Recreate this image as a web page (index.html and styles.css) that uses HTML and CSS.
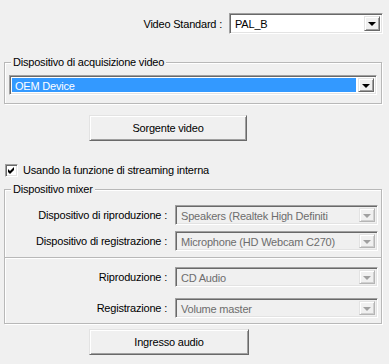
FILE: index.html
```html
<!DOCTYPE html>
<html lang="it">
<head>
	<meta charset="UTF-8">
	<title>Impostazioni video</title>
	<link rel="stylesheet" href="styles.css">
</head>
<body>
	<div class="dialog">
		<div class="std-row">
			<span class="label">Video Standard :</span>
			<div class="combo std">
				<span class="value">PAL_B</span>
				<span class="drop"><i></i></span>
			</div>
		</div>

		<div class="group capture">
			<span class="group-title">Dispositivo di acquisizione video</span>
			<div class="combo sel">
				<span class="value">OEM Device</span>
				<span class="drop"><i></i></span>
			</div>
		</div>

		<button class="btn first">Sorgente video</button>

		<label class="check-row">
			<span class="check">
				<svg width="9" height="9" viewBox="0 0 9 9"><polygon points="1,3 3,5 7,1 7,4 3,8 1,6" fill="#000"/></svg>
			</span>
			Usando la funzione di streaming interna
		</label>

		<div class="group mixer">
			<span class="group-title">Dispositivo mixer</span>
			<div class="mix-grid">
				<span class="label">Dispositivo di riproduzione :</span>
				<div class="combo off">
					<span class="value">Speakers (Realtek High Definiti</span>
					<span class="drop"><i></i></span>
				</div>
				<span class="label">Dispositivo di registrazione :</span>
				<div class="combo off">
					<span class="value">Microphone (HD Webcam C270)</span>
					<span class="drop"><i></i></span>
				</div>
			</div>
			<div class="divider"></div>
			<div class="mix-grid lower">
				<span class="label">Riproduzione :</span>
				<div class="combo off">
					<span class="value">CD Audio</span>
					<span class="drop"><i></i></span>
				</div>
				<span class="label">Registrazione :</span>
				<div class="combo off">
					<span class="value">Volume master</span>
					<span class="drop"><i></i></span>
				</div>
			</div>
		</div>

		<button class="btn second">Ingresso audio</button>
	</div>
</body>
</html>
```

FILE: styles.css
```css
*{
	margin: 0;
	padding: 0;
	box-sizing: border-box;
}
body{
	background: #f0f0f0;
	font-family: "Liberation Sans", Arial, sans-serif;
	font-size: 11px;
	letter-spacing: -0.2px;
	color: #000;
}
.dialog{
	width: 389px;
	height: 364px;
	overflow: hidden;
}
.std-row{
	display: flex;
	justify-content: flex-end;
	align-items: center;
	gap: 7px;
	padding: 13px 6px 0 0;
}

/* combo box */
.combo{
	display: flex;
	align-items: stretch;
	height: 20px;
	padding: 2px;
	background: #fff;
	border-top: 1px solid #a0a0a0;
	border-left: 1px solid #a0a0a0;
	border-right: 1px solid #fff;
	border-bottom: 1px solid #fff;
	box-shadow: inset 1px 1px 0 #696969, inset -1px -1px 0 #e3e3e3;
	padding: 1px 1px 1px 1px;
}
.combo.std{
	width: 154px;
	height: 21px;
}
.combo .value{
	flex: 1;
	line-height: 16px;
	padding-left: 3px;
	white-space: nowrap;
	overflow: hidden;
	margin: 1px 0 0 1px;
}
.combo.sel .value{
	background: #3399ff;
	color: #fff;
	margin: 1px 2px 1px 1px;
}
.combo .drop{
	width: 16px;
	margin: 1px 1px 1px 0;
	background: #f0f0f0;
	border-top: 1px solid #e3e3e3;
	border-left: 1px solid #e3e3e3;
	border-right: 1px solid #696969;
	border-bottom: 1px solid #696969;
	box-shadow: inset 1px 1px 0 #fff, inset -1px -1px 0 #a0a0a0;
	display: flex;
	align-items: center;
	justify-content: center;
}
.combo .drop i{
	width: 0;
	height: 0;
	border-left: 4px solid transparent;
	border-right: 4px solid transparent;
	border-top: 4px solid #000;
	margin-top: 1px;
}
.combo.off{
	background: #f0f0f0;
	color: #6d6d6d;
}
.combo.off .drop i{
	border-top-color: #a0a0a0;
}
.combo.off .drop{
	border-right-color: #b5b5b5;
	border-bottom-color: #b5b5b5;
	box-shadow: inset 1px 1px 0 #fff, inset -1px -1px 0 #d0d0d0;
}

/* group box */
.group{
	position: relative;
	width: 378px;
	margin-left: 4px;
	border: 1px solid #b8b8b8;
	box-shadow: inset 1px 1px 0 #fff, 1px 1px 0 #fff;
}
.group-title{
	position: absolute;
	top: -7px;
	left: 6px;
	padding: 0 2px;
	line-height: 13px;
	background: #f0f0f0;
}
.capture{
	margin-top: 28px;
	height: 42px;
	padding: 12px 4px 0 4px;
}
.mixer{
	margin-top: 12px;
	height: 135px;
	padding: 15px 3px 0 0;
}
.mix-grid{
	display: grid;
	grid-template-columns: 1fr 203px;
	column-gap: 8px;
	row-gap: 6px;
	align-items: center;
}
.mix-grid.lower{
	row-gap: 11px;
}
.mix-grid .label{
	text-align: right;
}
.divider{
	height: 2px;
	margin: 6px -3px 8px 0;
	border-top: 1px solid #b8b8b8;
	border-bottom: 1px solid #fff;
}

/* buttons */
.btn{
	display: block;
	height: 26px;
	margin-left: 89px;
	font-family: inherit;
	font-size: 11px;
	letter-spacing: -0.2px;
	color: #000;
	background: #f0f0f0;
	border-top: 1px solid #e3e3e3;
	border-left: 1px solid #e3e3e3;
	border-right: 1px solid #696969;
	border-bottom: 1px solid #696969;
	box-shadow: inset 1px 1px 0 #fff, inset -1px -1px 0 #a0a0a0;
}
.btn.first{
	width: 158px;
	margin-top: 11px;
}
.btn.second{
	width: 160px;
	margin-top: 5px;
}

/* checkbox */
.check-row{
	display: flex;
	align-items: center;
	gap: 5px;
	margin: 23px 0 0 5px;
	line-height: 13px;
}
.check{
	width: 13px;
	height: 13px;
	background: #fff;
	border-top: 1px solid #a0a0a0;
	border-left: 1px solid #a0a0a0;
	border-right: 1px solid #fff;
	border-bottom: 1px solid #fff;
	box-shadow: inset 1px 1px 0 #696969, inset -1px -1px 0 #e3e3e3;
	display: flex;
	align-items: center;
	justify-content: center;
}
.check svg{
	display: block;
}
```
